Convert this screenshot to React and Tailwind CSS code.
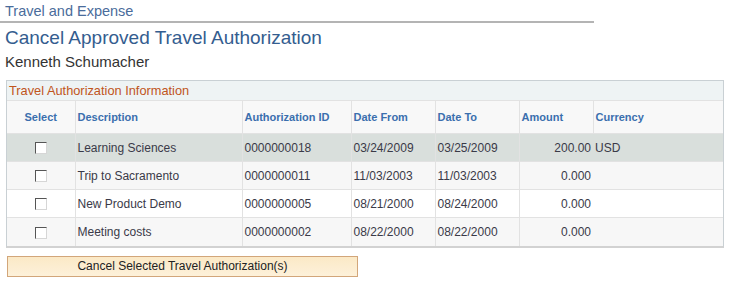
import React from "react";

const rows = [
  { desc: "Learning Sciences", id: "0000000018", from: "03/24/2009", to: "03/25/2009", amt: "200.00", cur: "USD", bg: "bg-[#d9dfdc]" },
  { desc: "Trip to Sacramento", id: "0000000011", from: "11/03/2003", to: "11/03/2003", amt: "0.000", cur: "", bg: "bg-[#f7f7f7]" },
  { desc: "New Product Demo", id: "0000000005", from: "08/21/2000", to: "08/24/2000", amt: "0.000", cur: "", bg: "bg-white" },
  { desc: "Meeting costs", id: "0000000002", from: "08/22/2000", to: "08/22/2000", amt: "0.000", cur: "", bg: "bg-[#f7f7f7]" },
];

function Checkbox() {
  return (
    <span className="inline-block w-[12px] h-[12px] bg-white border border-t-[#555] border-l-[#555] border-r-[#d6d6d6] border-b-[#d6d6d6] align-middle" />
  );
}

export default function App() {
  const th = "border-l border-[#e2e2e2] text-left font-bold text-[11px] text-[#3b6fae] px-[2px] align-middle";
  const td = "border-l border-t border-[#e2e2e2] text-[12px] text-[#3a3a48] px-[2px] align-middle";
  return (
    <div className="w-[732px] h-[283px] bg-white relative" style={{ fontFamily: '"Liberation Sans", Arial, sans-serif' }}>
      <div className="pt-[2px] pl-[5px] text-[14.5px] leading-[18px] text-[#4a6c9b]">Travel and Expense</div>
      <div className="w-[594px] h-[2px] bg-[#b4b4b4] mt-[1px]" />
      <div className="pl-[5px] mt-[4px] text-[19px] leading-[22px] text-[#345d8f]">Cancel Approved Travel Authorization</div>
      <div className="pl-[5px] mt-[4px] text-[15px] leading-[17px] text-[#333]">Kenneth Schumacher</div>
      <div className="ml-[6px] mt-[10px] w-[718px] border border-[#c9d0d4] border-b-2 border-b-[#d2d2d2]">
        <div className="h-[19px] bg-[#eef3f4] pl-[2px] text-[12.8px] leading-[19px] text-[#c0551c]">Travel Authorization Information</div>
        <table className="w-full border-collapse table-fixed">
          <colgroup>
            <col className="w-[68px]" />
            <col className="w-[167px]" />
            <col className="w-[109px]" />
            <col className="w-[84px]" />
            <col className="w-[84px]" />
            <col className="w-[74px]" />
            <col />
          </colgroup>
          <thead>
            <tr className="h-[33px] bg-[#f8f8f8] border-t border-[#e2e2e2]">
              <th className={th + " !text-center border-l-0"}>Select</th>
              <th className={th}>Description</th>
              <th className={th}>Authorization ID</th>
              <th className={th}>Date From</th>
              <th className={th}>Date To</th>
              <th className={th}>Amount</th>
              <th className={th}>Currency</th>
            </tr>
          </thead>
          <tbody>
            {rows.map((r, i) => (
              <tr key={i} className={"h-[28px] " + r.bg}>
                <td className={td + " text-center border-l-0"}><Checkbox /></td>
                <td className={td}>{r.desc}</td>
                <td className={td}>{r.id}</td>
                <td className={td}>{r.from}</td>
                <td className={td}>{r.to}</td>
                <td className={td + " text-right"}>{r.amt}</td>
                <td className="border-t border-[#e2e2e2] text-[12px] text-[#3a3a48] px-[2px] align-middle">{r.cur}</td>
              </tr>
            ))}
          </tbody>
        </table>
      </div>
      <button className="ml-[7px] mt-[8px] w-[351px] h-[21px] border border-[#d2a67a] bg-gradient-to-b from-[#fbe9c6] to-[#fdf1da] text-[12px] text-[#222] leading-[19px] text-center">
        Cancel Selected Travel Authorization(s)
      </button>
    </div>
  );
}
